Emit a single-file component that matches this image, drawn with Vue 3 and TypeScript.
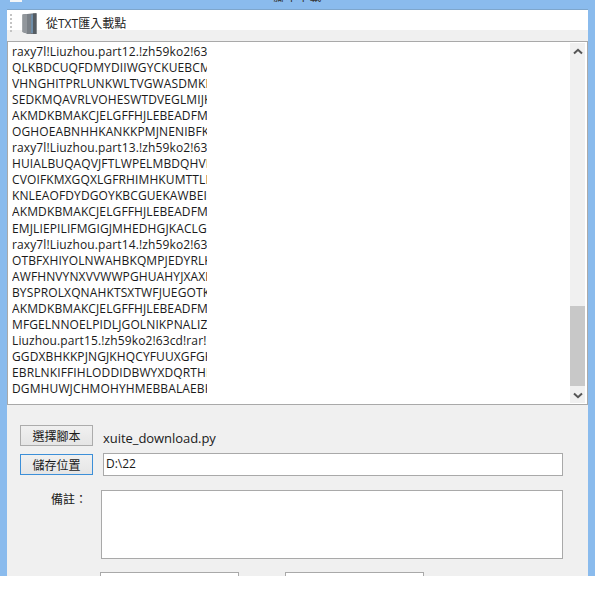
<script setup lang="ts">
const lines: string[] = [
  'raxy7l!Liuzhou.part12.!zh59ko2!63cd!rar',
  'QLKBDCUQFDMYDIIWGYCKUEBCMHTSL',
  'VHNGHITPRLUNKWLTVGWASDMKPLQRT',
  'SEDKMQAVRLVOHESWTDVEGLMIJKPQR',
  'AKMDKBMAKCJELGFFHJLEBEADFMGKP',
  'OGHOEABNHHKANKKPMJNENIBFKLQRT',
  'raxy7l!Liuzhou.part13.!zh59ko2!63cd!rar',
  'HUIALBUQAQVJFTLWPELMBDQHVKLRT',
  'CVOIFKMXGQXLGFRHIMHKUMTTLKPQR',
  'KNLEAOFDYDGOYKBCGUEKAWBEIKLQRT',
  'AKMDKBMAKCJELGFFHJLEBEADFMGKP',
  'EMJLIEPILIFMGIGJMHEDHGJKACLGKPR',
  'raxy7l!Liuzhou.part14.!zh59ko2!63cd!rar',
  'OTBFXHIYOLNWAHBKQMPJEDYRLKPQR',
  'AWFHNVYNXVVWWPGHUAHYJXAXKLQRT',
  'BYSPROLXQNAHKTSXTWFJUEGOTKLPQ',
  'AKMDKBMAKCJELGFFHJLEBEADFMGKP',
  'MFGELNNOELPIDLJGOLNIKPNALIZKPQR',
  'Liuzhou.part15.!zh59ko2!63cd!rar!KLPQR',
  'GGDXBHKKPJNGJKHQCYFUUXGFGKLPQR',
  'EBRLNKIFFIHLODDIDBWYXDQRTHKLPQ',
  'DGMHUWJCHMOHYHMEBBALAEBKLPQRT',
]
</script>

<template>
  <div class="page">
    <div class="window">
      <div class="titlebar">
        <span class="app-icon"></span>
        <span class="title">腳本下載</span>
      </div>
      <div class="client">
        <div class="toolbar">
          <span class="grip"></span>
          <svg class="tb-icon" width="15" height="21" viewBox="0 0 15 21">
            <path d="M0.5 1.5 L14.5 0 V21 H6 L0.5 19 Z" fill="#70767c" />
            <path d="M0.5 1.5 L5 1 V20.5 L0.5 19 Z" fill="#92979c" />
            <path d="M5 1 H9 V21 H5 Z" fill="#7b8187" />
            <path d="M9 1.5 H11 V20 H9 Z" fill="#6f8ea9" />
            <path d="M11 0.5 H14.5 V21 H11 Z" fill="#555c62" />
          </svg>
          <span class="tb-text">從TXT匯入載點</span>
        </div>
        <div class="strip"></div>
        <div class="editor">
          <div class="lines">
            <div v-for="(line, i) in lines" :key="i" class="line">{{ line }}</div>
          </div>
          <div class="scrollbar">
            <svg class="arrow" width="10" height="7" viewBox="0 0 10 7">
              <path d="M1 5.5 L5 1.8 L9 5.5" fill="none" stroke="#555" stroke-width="2" />
            </svg>
            <div class="track"><div class="thumb"></div></div>
            <svg class="arrow" width="10" height="7" viewBox="0 0 10 7">
              <path d="M1 1.5 L5 5.2 L9 1.5" fill="none" stroke="#555" stroke-width="2" />
            </svg>
          </div>
        </div>
        <div class="form">
          <div class="row row-script">
            <button class="btn">選擇腳本</button>
            <span class="filename">xuite_download.py</span>
          </div>
          <div class="row row-save">
            <button class="btn btn-focus">儲存位置</button>
            <div class="input">D:\22</div>
          </div>
          <div class="row row-note">
            <span class="note-label">備註：</span>
            <div class="textarea"></div>
          </div>
          <div class="row row-bottom">
            <div class="stub"></div>
            <div class="stub"></div>
          </div>
        </div>
      </div>
    </div>
  </div>
</template>

<style scoped>
.page {
  width: 595px;
  height: 599px;
  background: #fff;
  overflow: hidden;
  font-family: "Open Sans", "Noto Sans CJK TC", sans-serif;
  color: #1a1a1a;
}
.window {
  height: 576px;
  background: #8abbed;
  padding: 0 7px;
  box-sizing: border-box;
  overflow: hidden;
}
.titlebar {
  height: 9px;
  display: flex;
  justify-content: center;
  overflow: hidden;
  position: relative;
}
.app-icon {
  position: absolute;
  left: 3px;
  top: 0;
  width: 12px;
  height: 2px;
  background: #f4f6f8;
}
.title {
  font-size: 12px;
  line-height: 12px;
  margin-top: -9px;
  color: #333;
}
.client {
  height: 567px;
  background: #f0f0f0;
  overflow: hidden;
  border-top: 1px solid #7ea6cc;
  box-sizing: border-box;
}
.toolbar {
  height: 20px;
  background: #fff;
  display: flex;
  align-items: flex-start;
  position: relative;
}
.grip {
  width: 2px;
  height: 18px;
  margin: 4px 0 0 3px;
  background: repeating-linear-gradient(to bottom, #c4c4c4 0 2px, transparent 2px 4px);
}
.tb-icon {
  margin: 3px 0 0 10px;
  flex: none;
}
.tb-text {
  margin-left: 9px;
  font-size: 12px;
  line-height: 16px;
  margin-top: 6px;
  color: #222;
}
.strip {
  height: 11px;
}
.editor {
  height: 364px;
  box-sizing: border-box;
  border: 1px solid #a9a9a9;
  background: #fff;
  display: flex;
  justify-content: space-between;
}
.lines {
  width: 199px;
  box-sizing: border-box;
  padding: 2px 0 0 4px;
  overflow: hidden;
  font-size: 12px;
  line-height: 16.05px;
  letter-spacing: 0.12px;
}
.line {
  white-space: nowrap;
  overflow: hidden;
}
.scrollbar {
  width: 15px;
  margin: 1px 2px 1px 0;
  background: #f0f0f0;
  display: flex;
  flex-direction: column;
  align-items: center;
}
.arrow {
  flex: none;
  margin: 5px 0 4px;
}
.track {
  flex: 1;
  width: 100%;
}
.thumb {
  height: 80px;
  margin-top: 247px;
  background: #c8c8c8;
}
.form {
  padding: 20px 0 0 13px;
  font-size: 12px;
}
.row {
  display: flex;
}
.row-script {
  height: 21px;
}
.btn {
  width: 73px;
  height: 21px;
  padding: 0;
  box-sizing: border-box;
  border: 1px solid #acacac;
  background: linear-gradient(#f0f0f0, #e5e5e5);
  font: inherit;
  font-family: "Noto Sans CJK TC", sans-serif;
  line-height: 16px;
  color: #1a1a1a;
}
.btn-focus {
  border-color: #3c8fd8;
}
.filename {
  margin-left: 10px;
  font-size: 13px;
  letter-spacing: -0.05px;
  line-height: 20px;
  margin-top: 3px;
}
.row-save {
  margin-top: 8px;
}
.input {
  margin-left: 10px;
  width: 460px;
  height: 23px;
  margin-top: -1px;
  box-sizing: border-box;
  border: 1px solid #a9a9a9;
  background: #fff;
  padding-left: 2px;
  line-height: 19px;
}
.row-note {
  margin-top: 14px;
}
.note-label {
  width: 81px;
  padding: 1px 0 0 31px;
  box-sizing: border-box;
  line-height: 16px;
  font-family: "Noto Sans CJK TC", sans-serif;
}
.textarea {
  width: 462px;
  height: 69px;
  box-sizing: border-box;
  border: 1px solid #a9a9a9;
  background: #fff;
}
.row-bottom {
  margin-top: 13px;
  padding-left: 80px;
  gap: 46px;
}
.stub {
  width: 139px;
  height: 20px;
  box-sizing: border-box;
  border: 1px solid #a9a9a9;
  background: #fff;
}
</style>
